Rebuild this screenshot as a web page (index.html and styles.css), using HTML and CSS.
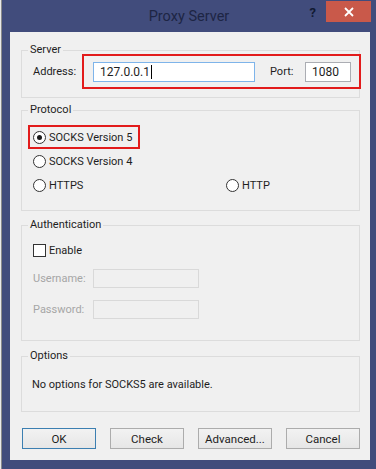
FILE: index.html
```html
<!DOCTYPE html>
<html lang="en">
<head>
  <meta charset="UTF-8" />
  <title>Proxy Server</title>
  <link rel="stylesheet" href="styles.css">
</head>
<body>
  <div class="desktop">
    <div class="behind"></div>
    <div class="window">
      <div class="titlebar">
        <span></span>
        <span class="title">Proxy Server</span>
        <div class="caption-buttons">
          <span class="help">?</span>
          <span class="close">
            <svg width="10" height="10" viewBox="0 0 10 10">
              <path d="M1 1 L9 9 M9 1 L1 9" stroke="#fff" stroke-width="1.8" fill="none"/>
            </svg>
          </span>
        </div>
      </div>

      <div class="client">
        <fieldset class="group server">
          <legend>Server</legend>
          <div class="server-row">
            <span class="row-label">Address:</span>
            <div class="mark server-mark">
              <div class="field address focused">127.0.0.1<span class="caret"></span></div>
              <span class="port-label">Port:</span>
              <div class="field port">1080</div>
            </div>
          </div>
        </fieldset>

        <fieldset class="group protocol">
          <legend>Protocol</legend>
          <div class="mark radio-mark">
            <span class="radio checked"></span>
            <span>SOCKS Version 5</span>
          </div>
          <div class="option-row">
            <span class="radio"></span>
            <span>SOCKS Version 4</span>
          </div>
          <div class="option-row split">
            <div class="option">
              <span class="radio"></span>
              <span>HTTPS</span>
            </div>
            <div class="option">
              <span class="radio"></span>
              <span>HTTP</span>
            </div>
          </div>
        </fieldset>

        <fieldset class="group auth">
          <legend>Authentication</legend>
          <div class="option-row enable">
            <span class="checkbox"></span>
            <span>Enable</span>
          </div>
          <div class="cred-row user">
            <span class="row-label">Username:</span>
            <div class="field disabled"></div>
          </div>
          <div class="cred-row pass">
            <span class="row-label">Password:</span>
            <div class="field disabled"></div>
          </div>
        </fieldset>

        <fieldset class="group options">
          <legend>Options</legend>
          <p class="note">No options for SOCKS5 are available.</p>
        </fieldset>

        <div class="buttons">
          <button class="btn default">OK</button>
          <button class="btn">Check</button>
          <button class="btn">Advanced...</button>
          <button class="btn">Cancel</button>
        </div>
      </div>
    </div>
  </div>
</body>
</html>
```

FILE: styles.css
```css
html, body {
  margin: 0;
  padding: 0;
  width: 376px;
  height: 469px;
  overflow: hidden;
  font-family: Roboto, "Noto Sans", sans-serif;
  font-size: 11px;
  color: #1e1e1e;
}

.desktop {
  display: flex;
  height: 469px;
}

.behind {
  width: 2px;
  background: #e9e9e9;
  border-right: 1px solid #8a8a8a;
  box-sizing: border-box;
}

.window {
  flex: 1;
  display: flex;
  flex-direction: column;
  background: #414c7c;
}

.titlebar {
  height: 32px;
  display: grid;
  grid-template-columns: 1fr auto 1fr;
  padding: 0 5px;
}

.title {
  font-size: 14.5px;
  line-height: 32px;
  color: #1d2544;
  padding-top: 1px;
}

.caption-buttons {
  display: flex;
  justify-content: flex-end;
  align-items: flex-start;
}

.help {
  font-weight: bold;
  font-size: 13px;
  color: #111a33;
  margin-top: 5px;
  margin-right: 10px;
}

.close {
  width: 45px;
  height: 21px;
  margin-top: 1px;
  background: #c9594a;
  display: flex;
  align-items: center;
  justify-content: center;
}

.client {
  height: 428px;
  margin: 0 6px 0 8px;
  background: #f0f0f0;
  padding-top: 11px;
  box-sizing: border-box;
}

.group {
  margin: 0 10px 0 11px;
  padding: 0;
  border: 1px solid #dcdcdc;
  min-width: 0;
}

.group legend {
  margin-left: 6px;
  padding: 0 2px;
  line-height: 14px;
}

/* server */
.server {
  padding-bottom: 8px;
}

.server-row {
  display: flex;
  align-items: center;
  margin-top: -3px;
  padding-left: 11px;
}

.row-label {
  width: 49px;
  flex: none;
}

.mark {
  border: 2px solid #e21b1b;
}

.server-mark {
  flex: 1;
  display: flex;
  align-items: center;
  height: 31px;
  margin-right: -2px;
  padding: 0 8px 0 9px;
}

.field {
  height: 20px;
  box-sizing: border-box;
  border: 1px solid #abadb3;
  background: #fff;
  font-size: 12px;
  line-height: 18px;
  padding-left: 6px;
  display: flex;
  align-items: center;
}

.field.focused {
  border-color: #7eb4ea;
}

.address {
  width: 162px;
}

.caret {
  width: 1px;
  height: 14px;
  background: #000;
  margin-left: 1px;
}

.port-label {
  margin-left: 15px;
}

.port {
  width: 46px;
  margin-left: auto;
}

/* protocol */
.protocol {
  margin-top: 5px;
  padding-bottom: 13px;
}

.radio-mark {
  display: inline-flex;
  align-items: center;
  gap: 3px;
  height: 20px;
  margin: 8px 0 0 6px;
  padding: 0 6px 0 3px;
}

.option-row {
  display: flex;
  align-items: center;
  gap: 3px;
  height: 24px;
  padding-left: 11px;
}

.split {
  display: grid;
  grid-template-columns: 190px 1fr;
}

.option {
  display: flex;
  align-items: center;
  gap: 3px;
}

.radio {
  width: 13px;
  height: 13px;
  box-sizing: border-box;
  border: 1px solid #333;
  border-radius: 50%;
  background: #fff;
  display: flex;
  align-items: center;
  justify-content: center;
}

.radio.checked::after {
  content: "";
  width: 5px;
  height: 5px;
  border-radius: 50%;
  background: #1a1a1a;
}

/* authentication */
.auth {
  margin-top: 7px;
  padding-bottom: 21px;
}

.enable {
  margin-top: 8px;
  height: 20px;
}

.checkbox {
  width: 13px;
  height: 13px;
  box-sizing: border-box;
  border: 1px solid #333;
  background: #fff;
}

.cred-row {
  display: flex;
  align-items: center;
  height: 20px;
  padding-left: 11px;
  color: #a6a6a6;
}

.cred-row .row-label {
  width: 60px;
}

.user {
  margin-top: 8px;
}

.pass {
  margin-top: 11px;
}

.field.disabled {
  width: 106px;
  height: 19px;
  border-color: #d9d9d9;
  background: #f0f0f0;
}

/* options */
.options {
  margin-top: 8px;
}

.note {
  margin: 0;
  padding: 15px 0 19px 10px;
  line-height: 14px;
}

/* buttons */
.buttons {
  display: flex;
  justify-content: space-between;
  margin-top: 16px;
  padding: 0 10px 0 12px;
}

.btn {
  width: 74px;
  height: 21px;
  padding: 0;
  font: inherit;
  font-size: 11.5px;
  color: #1e1e1e;
  border: 1px solid #acacac;
  background: linear-gradient(#f2f2f2, #e6e6e6);
}

.btn.default {
  border-color: #3c7fb1;
}
```
